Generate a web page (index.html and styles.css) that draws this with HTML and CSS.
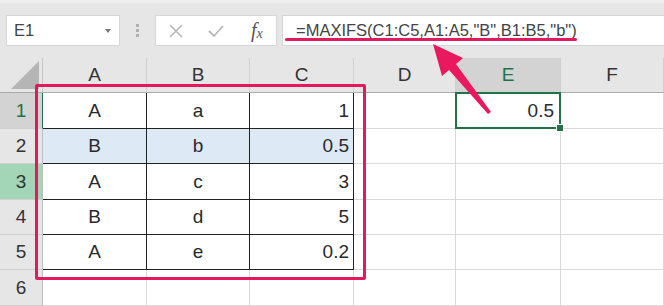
FILE: index.html
```html
<!DOCTYPE html>
<html lang="ja">
<head>
    <meta charset="UTF-8">
    <title>MAXIFS</title>
    <link rel="stylesheet" href="styles.css">
</head>
<body>
    <div class="sheet">
        <div class="toolbar">
            <div class="namebox">
                <span>E1</span>
                <span class="caret"></span>
            </div>
            <div class="grip"><i></i><i></i><i></i></div>
            <div class="fxbtns">
                <svg width="14" height="14" viewBox="0 0 14 14"><path d="M1 1 L13 13 M13 1 L1 13" stroke="#b8b8b8" stroke-width="1.6" fill="none"/></svg>
                <svg width="16" height="14" viewBox="0 0 16 14"><path d="M1 7 L6 12 L15 2" stroke="#b8b8b8" stroke-width="1.8" fill="none"/></svg>
                <span class="fx">f<sub>x</sub></span>
            </div>
            <div class="formula">=MAXIFS(C1:C5,A1:A5,"B",B1:B5,"b")</div>
        </div>

        <div class="grid">
            <!-- 見出し -->
            <div class="c corner"><span class="tri"></span></div>
            <div class="c hd">A</div>
            <div class="c hd">B</div>
            <div class="c hd">C</div>
            <div class="c hd">D</div>
            <div class="c hd sel">E</div>
            <div class="c hd">F</div>

            <div class="c rh sel">1</div>
            <div class="c t">A</div>
            <div class="c t">a</div>
            <div class="c t num">1</div>
            <div class="c"></div>
            <div class="c num active">0.5</div>
            <div class="c"></div>

            <div class="c rh">2</div>
            <div class="c t blue">B</div>
            <div class="c t blue">b</div>
            <div class="c t blue num">0.5</div>
            <div class="c"></div>
            <div class="c"></div>
            <div class="c"></div>

            <div class="c rh hit">3</div>
            <div class="c t">A</div>
            <div class="c t">c</div>
            <div class="c t num">3</div>
            <div class="c"></div>
            <div class="c"></div>
            <div class="c"></div>

            <div class="c rh">4</div>
            <div class="c t">B</div>
            <div class="c t">d</div>
            <div class="c t num">5</div>
            <div class="c"></div>
            <div class="c"></div>
            <div class="c"></div>

            <div class="c rh">5</div>
            <div class="c t">A</div>
            <div class="c t">e</div>
            <div class="c t num">0.2</div>
            <div class="c"></div>
            <div class="c"></div>
            <div class="c"></div>

            <div class="c rh">6</div>
            <div class="c"></div>
            <div class="c"></div>
            <div class="c"></div>
            <div class="c"></div>
            <div class="c"></div>
            <div class="c"></div>
        </div>

        <!-- 注釈 -->
        <div class="mark-box"></div>
        <div class="mark-line"></div>
        <svg class="arrow" width="664" height="306" viewBox="0 0 664 306">
            <polygon points="433,44 463,58 456,64 491,112 488,114 449,70 442,76" fill="#e8195f"/>
        </svg>
    </div>
</body>
</html>
```

FILE: styles.css
```css
body {
    margin: 0;
    font-family: "Liberation Sans", Arial, sans-serif;
    background-color: #fff;
}
.sheet {
    position: relative;
    width: 664px;
    height: 306px;
    overflow: hidden;
}

/* 数式バー */
.toolbar {
    height: 58px;
    box-sizing: border-box;
    padding: 15px 0 0 6px;
    display: flex;
    align-items: flex-start;
    background-color: #e6e6e6;
    border-top: 3px solid #efefef;
}
.toolbar > div {
    height: 31px;
    box-sizing: border-box;
    margin-top: -3px;
}
.namebox {
    width: 114px;
    background-color: #fff;
    border: 1px solid #d6d6d6;
    display: flex;
    align-items: center;
    justify-content: space-between;
    padding: 0 8px 0 7px;
    font-size: 16.5px;
    color: #444;
}
.caret {
    width: 0;
    height: 0;
    border-left: 3px solid transparent;
    border-right: 3px solid transparent;
    border-top: 4px solid #777;
}
.grip {
    width: 35px;
    display: flex;
    flex-direction: column;
    align-items: center;
    justify-content: center;
    gap: 2px;
}
.grip i {
    width: 3px;
    height: 3px;
    background-color: #b0b0b0;
}
.fxbtns {
    width: 122px;
    background-color: #fff;
    border: 1px solid #d6d6d6;
    display: flex;
    align-items: center;
    padding: 0 10px 0 13px;
    gap: 25px;
    margin-right: 5px;
}
.fx {
    font-family: "Liberation Serif", "Times New Roman", serif;
    font-style: italic;
    font-size: 20px;
    color: #555;
    margin-left: 2px;
}
.fx sub {
    font-size: 14px;
    vertical-align: -1px;
}
.formula {
    flex: 1;
    background-color: #fff;
    border: 1px solid #d6d6d6;
    border-right: none;
    padding: 0 0 0 13px;
    font-size: 16.5px;
    line-height: 29px;
    color: #444;
    white-space: nowrap;
}

/* セル */
.grid {
    display: grid;
    grid-template-columns: 43px 104px 103px 104px 102px 105px 1fr;
    grid-template-rows: 35px 36px 35px 36px 35px 35px 36px;
    font-size: 19px;
    color: #2a2a2a;
}
.c {
    box-sizing: border-box;
    border-right: 1px solid #d9d9d9;
    border-bottom: 1px solid #d9d9d9;
    display: flex;
    align-items: center;
    justify-content: center;
}
.corner {
    background-color: #e6e6e6;
    border-right: 1px solid #c6c6c6;
    border-bottom: 1px solid #ababab;
    align-items: flex-end;
    justify-content: flex-end;
    padding: 0 3px 3px 0;
}
.tri {
    width: 28px;
    height: 28px;
    background-color: #b5b5b5;
    clip-path: polygon(100% 0, 100% 100%, 0 100%);
}
.hd {
    background-color: #e6e6e6;
    border-right: 1px solid #cfcfcf;
    border-bottom: 1px solid #ababab;
    color: #333;
}
.rh {
    background-color: #e6e6e6;
    border-right: 1px solid #bdbdbd;
    border-bottom: 1px solid #cfcfcf;
    color: #333;
}
.sel {
    background-color: #d3d3d3;
    color: #217346;
}
.rh.sel {
    border-right: 1px solid #217346;
}
.hit {
    background-color: #a3d6b6;
}
.t {
    border-right: 1px solid #222;
    border-bottom: 1px solid #222;
}
.blue {
    background-color: #dde9f5;
}
.num {
    justify-content: flex-end;
    padding-right: 4px;
}
.active {
    position: relative;
    padding-right: 6px;
}
.active::after {
    content: "";
    position: absolute;
    top: -1px;
    left: -1px;
    right: -1px;
    bottom: -1px;
    border: 2px solid #217346;
}
.active::before {
    content: "";
    position: absolute;
    right: -4px;
    bottom: -4px;
    width: 6px;
    height: 6px;
    background-color: #217346;
    border: 1px solid #fff;
    z-index: 1;
}

/* 注釈 */
.mark-box {
    position: absolute;
    left: 35px;
    top: 84px;
    width: 331px;
    height: 196px;
    box-sizing: border-box;
    border: 3px solid #e5175d;
    border-radius: 2px;
}
.mark-line {
    position: absolute;
    left: 285px;
    top: 38px;
    width: 292px;
    height: 3px;
    border-radius: 2px;
    background-color: #e5175d;
}
.arrow {
    position: absolute;
    left: 0;
    top: 0;
}
```
